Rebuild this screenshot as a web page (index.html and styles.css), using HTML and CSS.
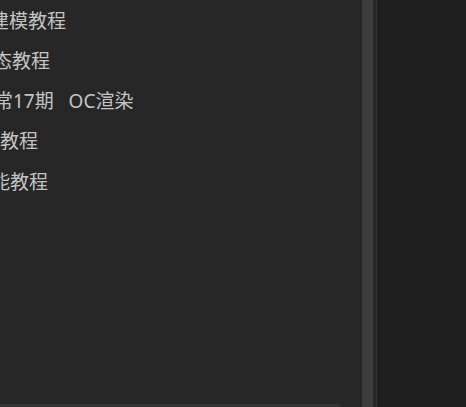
FILE: index.html
```html
<!DOCTYPE html>
<html lang="zh">
<head>
<meta charset="utf-8">
<link rel="stylesheet" href="styles.css">
</head>
<body>
<div class="app">
  <div class="sidebar">
    <ul class="list">
      <li class="row"><span class="label r1">建模教程</span></li>
      <li class="row"><span class="label r2">态教程</span></li>
      <li class="row"><span class="label r3">常17期&nbsp;&nbsp;&nbsp;OC渲染</span></li>
      <li class="row"><span class="label r4">教程</span></li>
      <li class="row"><span class="label r5">能教程</span></li>
    </ul>
    <div class="hscroll"></div>
  </div>
  <div class="vscroll"></div>
  <div class="gutter"></div>
  <div class="divider"></div>
  <div class="main"></div>
</div>
</body>
</html>
```
FILE: styles.css
```css
html, body {
  margin: 0;
  padding: 0;
  height: 100%;
  overflow: hidden;
  background: #1f1f1f;
}
.app {
  display: flex;
  height: 407px;
}
.sidebar {
  width: 362px;
  background: #262626;
  display: flex;
  flex-direction: column;
  overflow: hidden;
}
.list {
  list-style: none;
  margin: 0;
  padding: 1px 0 0;
  flex: 1;
}
.row {
  height: 40.25px;
  display: flex;
  align-items: center;
  white-space: nowrap;
  overflow: hidden;
}
.label {
  font-family: "Noto Sans", "Noto Sans CJK SC", "Microsoft YaHei", sans-serif;
  font-size: 19px;
  color: #c4c4c4;
  line-height: 1;
}
.r1 { margin-left: -10px; }
.r2 { margin-left: -7px; }
.r3 { margin-left: -6px; }
.r4 { margin-left: 0; }
.r5 { margin-left: -9px; }
.hscroll {
  width: 340px;
  height: 3px;
  background: #353535;
  border-top-right-radius: 3px;
}
.vscroll {
  width: 11px;
  background: #3d3d3d;
}
.gutter {
  width: 3px;
  background: #282828;
}
.divider {
  width: 1px;
  background: #353535;
}
.main {
  flex: 1;
  background: #1f1f1f;
}
```
